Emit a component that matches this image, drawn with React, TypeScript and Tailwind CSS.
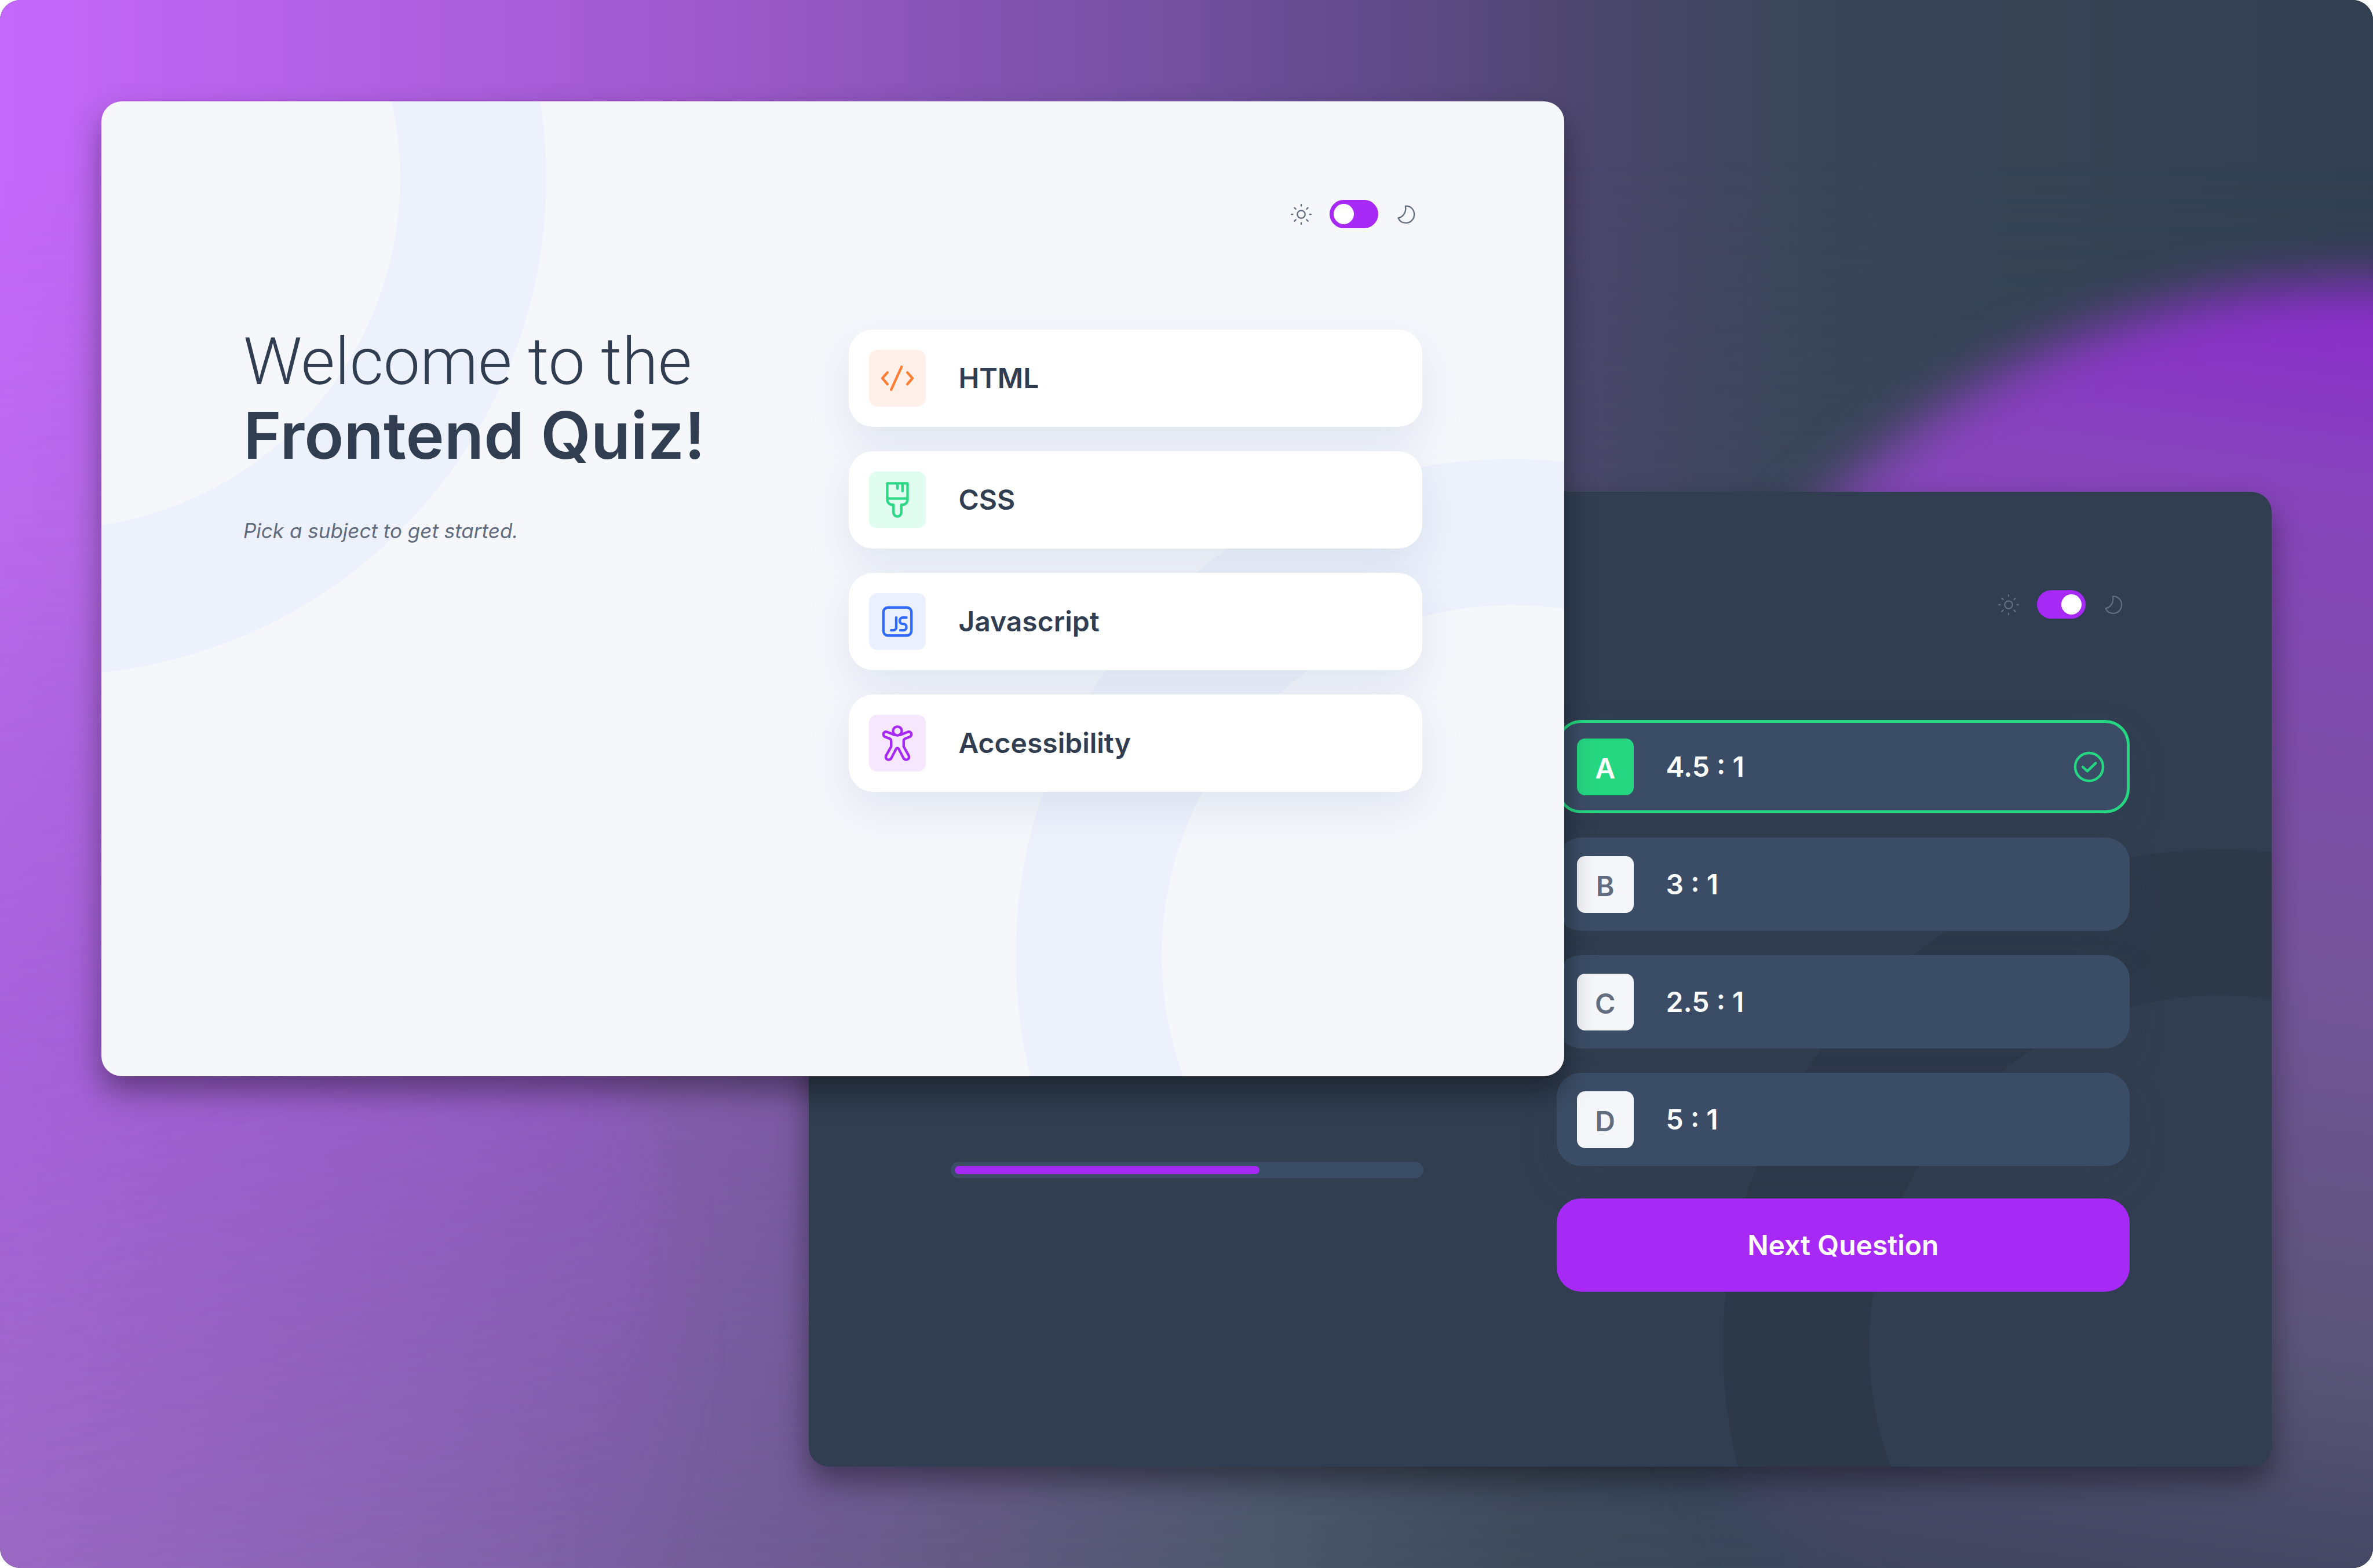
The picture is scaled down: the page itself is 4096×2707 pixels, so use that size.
import React from "react";

type Tone = "light" | "dark";

function SunIcon() {
  return (
    <svg viewBox="0 0 144 144" className="size-[42px]" fill="none" stroke="currentColor" strokeWidth="8" strokeLinecap="round" aria-hidden="true">
      <circle cx="72" cy="72" r="23" />
      <path d="M72 14v8M72 122v8M14 72h8M122 72h8M32 33l8 8M112 33l-8 8M32 112l8-8M112 112l-8-8" />
    </svg>
  );
}

function MoonIcon() {
  return (
    <svg viewBox="0 0 144 144" className="size-[42px]" fill="none" stroke="currentColor" strokeWidth="8" strokeLinejoin="round" aria-hidden="true">
      <path d="M65 23C95 20 117 44 117 72C117 101 95 123 67 123C46 123 29 111 22 94C52 88 71 60 65 23Z" />
    </svg>
  );
}

function ThemeSwitch({ dark }: { dark: boolean }) {
  return (
    <label className="mr-[6px] ml-auto flex items-center gap-[28px] text-[#626c7f]">
      <SunIcon />
      <input
        type="checkbox"
        role="switch"
        aria-label="Dark theme"
        defaultChecked={dark}
        className="h-[49px] w-[84px] cursor-pointer appearance-none rounded-full bg-[#a729f5] p-[7px] before:block before:size-[35px] before:rounded-full before:bg-white before:content-[''] checked:before:translate-x-[35px]"
      />
      <MoonIcon />
    </label>
  );
}

function Rings({ tone }: { tone: Tone }) {
  return (
    <svg
      viewBox="0 0 2880 1920"
      preserveAspectRatio="xMidYMid slice"
      className={tone === "light" ? "absolute inset-0 size-full text-[#edf1fb]" : "absolute inset-0 size-full text-[#2d3949]"}
      fill="none"
      stroke="currentColor"
      strokeWidth="288"
      aria-hidden="true"
    >
      {tone === "light" && <circle cx="-102" cy="152" r="834" />}
      <circle cx="2778" cy="1682" r="834" />
    </svg>
  );
}

const iconProps = {
  viewBox: "0 0 336 336",
  className: "size-full",
  fill: "none",
  stroke: "currentColor",
  strokeWidth: 15,
  strokeLinecap: "round" as const,
  strokeLinejoin: "round" as const,
  "aria-hidden": true,
};

function CodeIcon() {
  return (
    <svg {...iconProps}>
      <path d="M109 134L79 168L109 203M227 134L257 168L227 203M193 100L131 236" />
    </svg>
  );
}

function BrushIcon() {
  return (
    <svg {...iconProps}>
      <path d="M108 70H228V167A30 30 0 0 1 198 197H191V243A23 23 0 0 1 145 243V197H138A30 30 0 0 1 108 167ZM108 160H228M168 70V101M198 70V116" />
    </svg>
  );
}

function ScriptIcon() {
  return (
    <svg {...iconProps}>
      <rect x="85" y="85" width="166" height="166" rx="27" />
      <path d="M161 145V203A17 17 0 0 1 144 220H131M221 145H199A17 17 0 0 0 182 162V165A17 17 0 0 0 199 182H204A17 17 0 0 1 221 199V203A17 17 0 0 1 204 220H185" />
    </svg>
  );
}

function PersonIcon() {
  return (
    <svg {...iconProps}>
      <circle cx="168" cy="96" r="26" />
      <path d="M150 119L108 102C95 97 85 106 85 116C86 124 90 129 96 131L120 140C127 143 131 148 131 155V188L103 238C94 254 103 266 116 266C124 266 129 262 133 255L160 202C164 195 172 195 176 202L203 255C207 262 212 266 220 266C233 266 242 254 233 238L205 188V155C205 148 209 143 216 140L240 131C246 129 250 124 251 116C251 106 241 97 228 102L186 119" />
    </svg>
  );
}

const subjects = [
  { name: "HTML", icon: <CodeIcon />, tile: "bg-[#fff1e9] text-[#ff7e35]" },
  { name: "CSS", icon: <BrushIcon />, tile: "bg-[#e0fdef] text-[#2fd887]" },
  { name: "Javascript", icon: <ScriptIcon />, tile: "bg-[#ebf0ff] text-[#306aff]" },
  { name: "Accessibility", icon: <PersonIcon />, tile: "bg-[#f6e7ff] text-[#a729f5]" },
];

const options = [
  { key: "A", text: "4.5 : 1", correct: true },
  { key: "B", text: "3 : 1", correct: false },
  { key: "C", text: "2.5 : 1", correct: false },
  { key: "D", text: "5 : 1", correct: false },
];

function StartScreen() {
  return (
    <section className="relative z-10 aspect-[3/2] w-[67.4%] overflow-hidden rounded-[35px] bg-[#f5f7fb] text-[#313e51]">
      <Rings tone="light" />
      <div className="relative px-[245px] pt-[170px]">
        <header className="flex">
          <ThemeSwitch dark={false} />
        </header>
        <div className="mt-[168px] grid grid-cols-2 gap-[56px]">
          <div>
            <h1 className="text-[113px] leading-[126px] whitespace-nowrap">
              <span className="block font-[Roboto,sans-serif] font-light">Welcome to the</span>
              <span className="block text-[112px] font-semibold">Frontend Quiz!</span>
            </h1>
            <p className="mt-[76px] text-[35px] leading-[53px] text-[#626c7f] italic">Pick a subject to get started.</p>
          </div>
          <ul className="flex flex-col gap-[42px] pt-[7px]">
            {subjects.map((s) => (
              <li key={s.name}>
                <button
                  type="button"
                  className="flex h-[168px] w-full items-center gap-[56px] rounded-[42px] bg-white px-[35px] text-left text-[48px] font-semibold shadow-[0_28px_70px_rgba(143,160,193,0.2)]"
                >
                  <span className={`size-[98px] rounded-[14px] ${s.tile}`}>{s.icon}</span>
                  {s.name}
                </button>
              </li>
            ))}
          </ul>
        </div>
      </div>
    </section>
  );
}

function QuestionScreen() {
  return (
    <section className="relative -mt-[1009px] aspect-[3/2] w-[67.4%] self-end overflow-hidden rounded-[35px] bg-[#313e51] text-white">
      <Rings tone="dark" />
      <div className="relative px-[245px] pt-[170px]">
        <header className="flex">
          <ThemeSwitch dark />
        </header>
        <div className="mt-[168px] grid grid-cols-2 gap-[56px]">
          <div className="pt-[770px]">
            <div
              role="progressbar"
              aria-label="Quiz progress"
              aria-valuenow={65}
              aria-valuemin={0}
              aria-valuemax={100}
              className="h-[28px] max-w-[816px] rounded-full bg-[#3b4d66] p-[7px]"
            >
              <div className="h-full w-[65.500%] rounded-full bg-[#a729f5]" />
            </div>
          </div>
          <div className="flex flex-col gap-[56px] pt-[7px]">
            <ul className="flex flex-col gap-[42px]">
              {options.map((o) => (
                <li key={o.key}>
                  <button
                    type="button"
                    className={`flex h-[161px] w-full items-center gap-[56px] rounded-[42px] border-[5px] bg-[#3b4d66] px-[30px] text-left text-[48px] font-semibold shadow-[0_28px_70px_rgba(49,62,81,0.14)] ${o.correct ? "border-[#26d782]" : "border-[#3b4d66]"}`}
                  >
                    <span
                      className={`flex size-[98px] items-center justify-center rounded-[14px] pt-[6px] ${o.correct ? "bg-[#26d782] text-white" : "bg-[#f4f6fa] text-[#626c7f]"}`}
                    >
                      {o.key}
                    </span>
                    {o.text}
                    {o.correct && (
                      <svg viewBox="0 0 80 80" className="ml-auto size-[70px]" fill="none" stroke="#26d782" strokeWidth="5" strokeLinecap="round" strokeLinejoin="round" role="img" aria-label="Correct">
                        <circle cx="40" cy="40" r="27.5" />
                        <path d="M27.500 40L36.500 48.500L53 32.500" />
                      </svg>
                    )}
                  </button>
                </li>
              ))}
            </ul>
            <button type="button" className="h-[161px] rounded-[42px] bg-[#a729f5] text-[48px] font-semibold text-white">
              Next Question
            </button>
          </div>
        </div>
      </div>
    </section>
  );
}

function Backdrop() {
  return (
    <div className="absolute inset-0" aria-hidden="true">
      <div className="absolute inset-0 bg-[linear-gradient(to_right,#9b6dc2_0%,#8265aa_19%,#6d5c92_34%,#5f5a7e_43%,#4c586a_53%,#3e4b5b_64%,#36445a_80%,#324054_100%)]" />
      <div className="absolute inset-0 bg-[linear-gradient(to_right,#c468fb_0%,#9f5acd_29%,#7a52a8_46%,#614b8a_58%,#4a466a_68%,#3a4658_76%,#364454_85%,#324051_100%)] mask-[linear-gradient(to_bottom,black_10%,transparent_100%)]" />
      <div className="absolute top-[38%] left-[-36%] aspect-square w-[64.400%] rounded-full bg-[linear-gradient(165deg,rgba(165,90,235,0)_10%,rgba(160,80,225,0.34)_36%,rgba(155,80,215,0.2)_52%,rgba(150,90,200,0)_76%)] blur-[45px]" />
      <div className="absolute top-[18%] right-[-31.700%] aspect-square w-[64.400%] rounded-full bg-[linear-gradient(188deg,#8a2ccb_7%,#8744bc_18%,#74559a_46%,#5a5578_68%,#40455f_83%)] blur-[45px]" />
    </div>
  );
}

export default function App() {
  return (
    <div className="bg-white font-[Inter,sans-serif]">
      <main className="relative min-h-screen overflow-hidden rounded-[35px] bg-[#3c4a5a] p-[175px]">
        <Backdrop />
        <div className="relative flex flex-col *:shadow-[0_26px_52px_rgba(0,0,0,0.4)]">
          <StartScreen />
          <QuestionScreen />
        </div>
      </main>
    </div>
  );
}
